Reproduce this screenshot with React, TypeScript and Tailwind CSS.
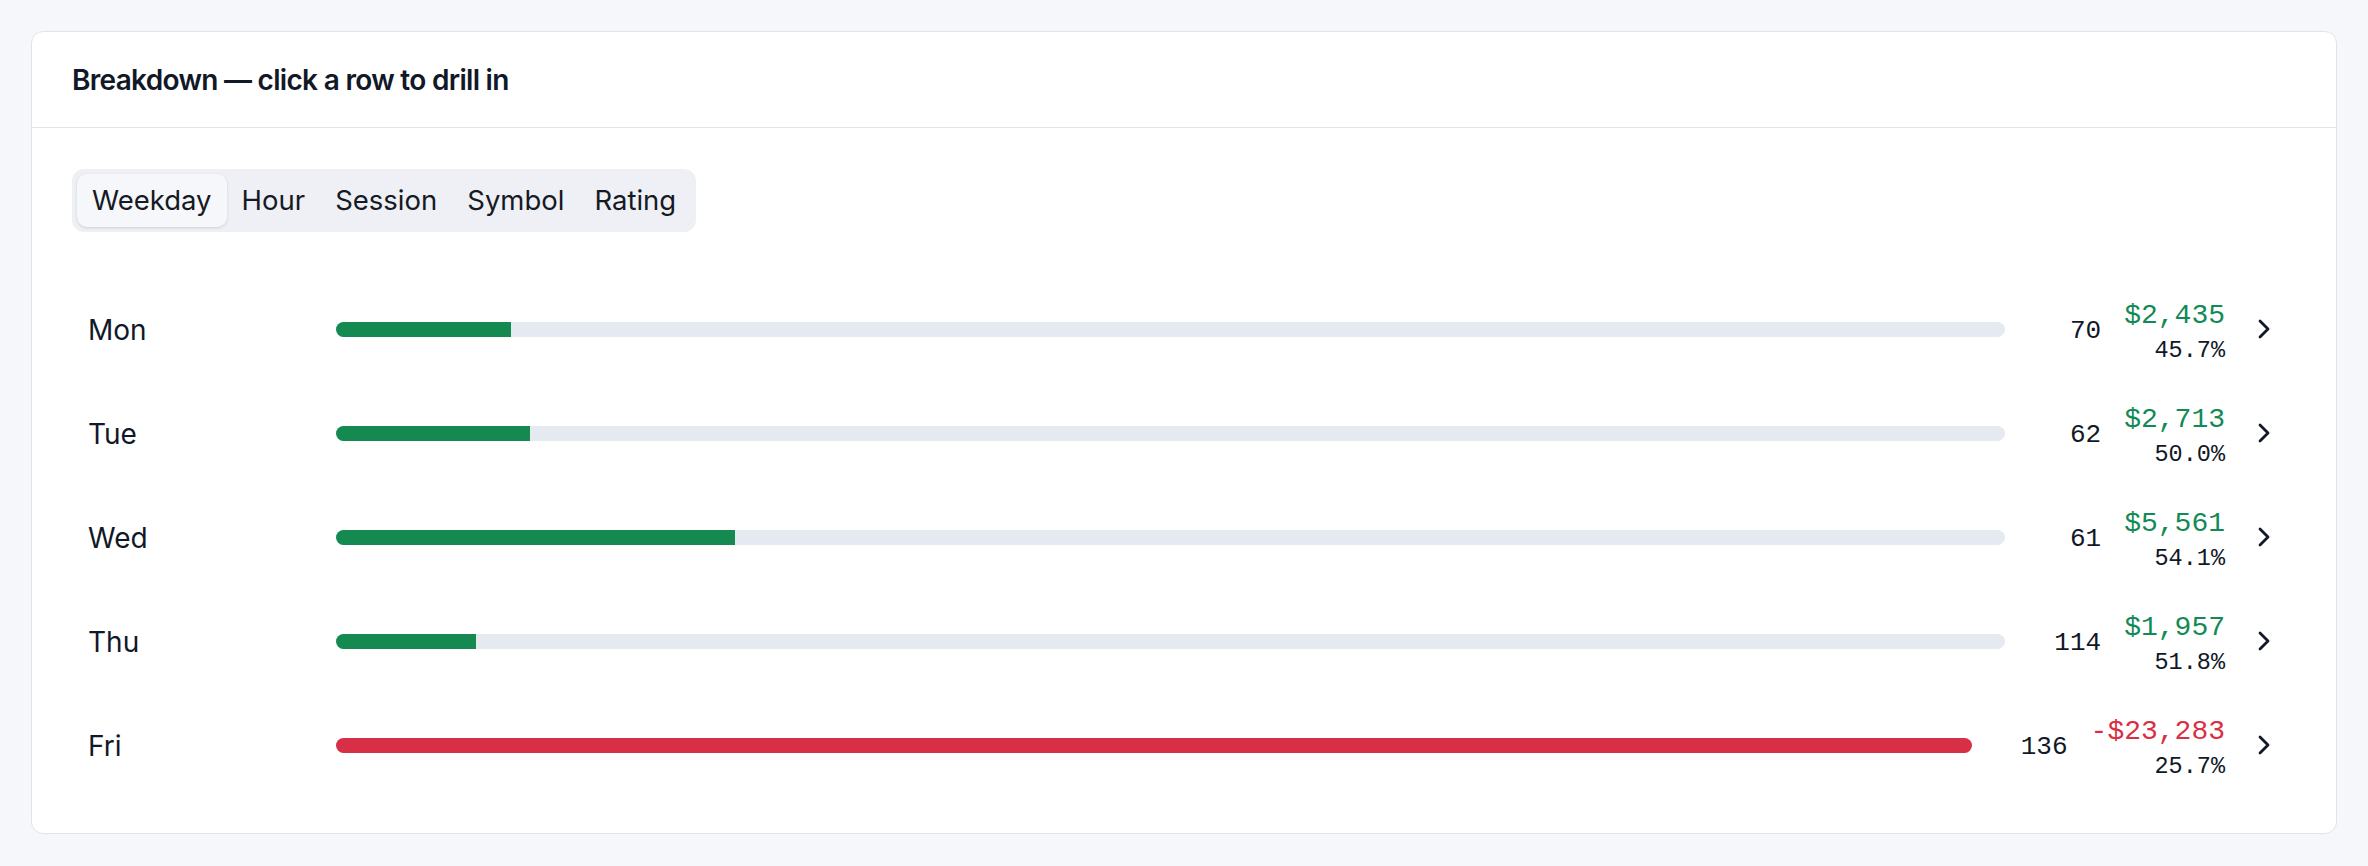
import { ChevronRight } from "lucide-react";

type Row = { label: string; count: number; pnl: number; pct: string };

const rows: Row[] = [
  { label: "Mon", count: 70, pnl: 2435, pct: "45.7%" },
  { label: "Tue", count: 62, pnl: 2713, pct: "50.0%" },
  { label: "Wed", count: 61, pnl: 5561, pct: "54.1%" },
  { label: "Thu", count: 114, pnl: 1957, pct: "51.8%" },
  { label: "Fri", count: 136, pnl: -23283, pct: "25.7%" },
];

const max = Math.max(...rows.map((r) => Math.abs(r.pnl)));

const fmt = (v: number) =>
  (v < 0 ? "-$" : "$") + Math.abs(v).toLocaleString("en-US");

const tabs = ["Weekday", "Hour", "Session", "Symbol", "Rating"];

export default function App() {
  return (
    <div className="min-h-screen bg-[#f6f7fb] p-[31px]">
      <div className="rounded-[12px] border border-[#dfe3ea] bg-white">
        <div className="flex h-[96px] items-center border-b border-[#dfe3ea] px-[40px]">
          <h2 className="font-['Inter',sans-serif] text-[28px] font-semibold tracking-[-0.025em] text-[#111827]">
            Breakdown — click a row to drill in
          </h2>
        </div>
        <div className="px-[40px] pt-[41px] pb-[36px]">
          <div className="inline-flex rounded-[12px] bg-[#eef0f5] p-[5px]">
            {tabs.map((t, i) => (
              <div
                key={t}
                className={
                  i === 0
                    ? "flex h-[53px] items-center rounded-[10px] bg-[#f6f7fa] px-[15px] font-['Inter',sans-serif] text-[27.5px] text-[#151a24] shadow-[0_1px_3px_rgba(16,24,40,0.14)]"
                    : "flex h-[53px] items-center rounded-[10px] px-[15px] font-['Inter',sans-serif] text-[27.5px] text-[#151a24]"
                }
              >
                {t}
              </div>
            ))}
          </div>
          <div className="mt-[45px]">
            {rows.map((r) => {
              const pos = r.pnl >= 0;
              return (
                <div
                  key={r.label}
                  className="flex h-[104px] items-center gap-[23px] rounded-[10px] px-[16px]"
                >
                  <div className="w-[225px] shrink-0 pt-[2px] font-['Inter',sans-serif] text-[28px] text-[#111827]">
                    {r.label}
                  </div>
                  <div className="h-[15px] flex-1 overflow-hidden rounded-full bg-[#e5e9f0]">
                    <div
                      className={pos ? "h-full bg-[#148a50]" : "h-full bg-[#d72f46]"}
                      style={{ width: `${(Math.abs(r.pnl) / max) * 100}%` }}
                    />
                  </div>
                  <div className="w-[73px] shrink-0 pt-[3px] text-right font-['Liberation_Mono',monospace] text-[26px] leading-[36px] text-[#111827]">
                    {r.count}
                  </div>
                  <div className="flex shrink-0 flex-col items-end font-['Liberation_Mono',monospace]">
                    <div
                      className={
                        pos
                          ? "text-[28px] leading-[42px] text-[#138a55]"
                          : "text-[28px] leading-[42px] text-[#da2f43]"
                      }
                    >
                      {fmt(r.pnl)}
                    </div>
                    <div className="text-[23.5px] leading-[27px] text-[#111827]">
                      {r.pct}
                    </div>
                  </div>
                  <ChevronRight
                    className="shrink-0 text-[#111827]"
                    size={32}
                    strokeWidth={2.1}
                  />
                </div>
              );
            })}
          </div>
        </div>
      </div>
    </div>
  );
}
